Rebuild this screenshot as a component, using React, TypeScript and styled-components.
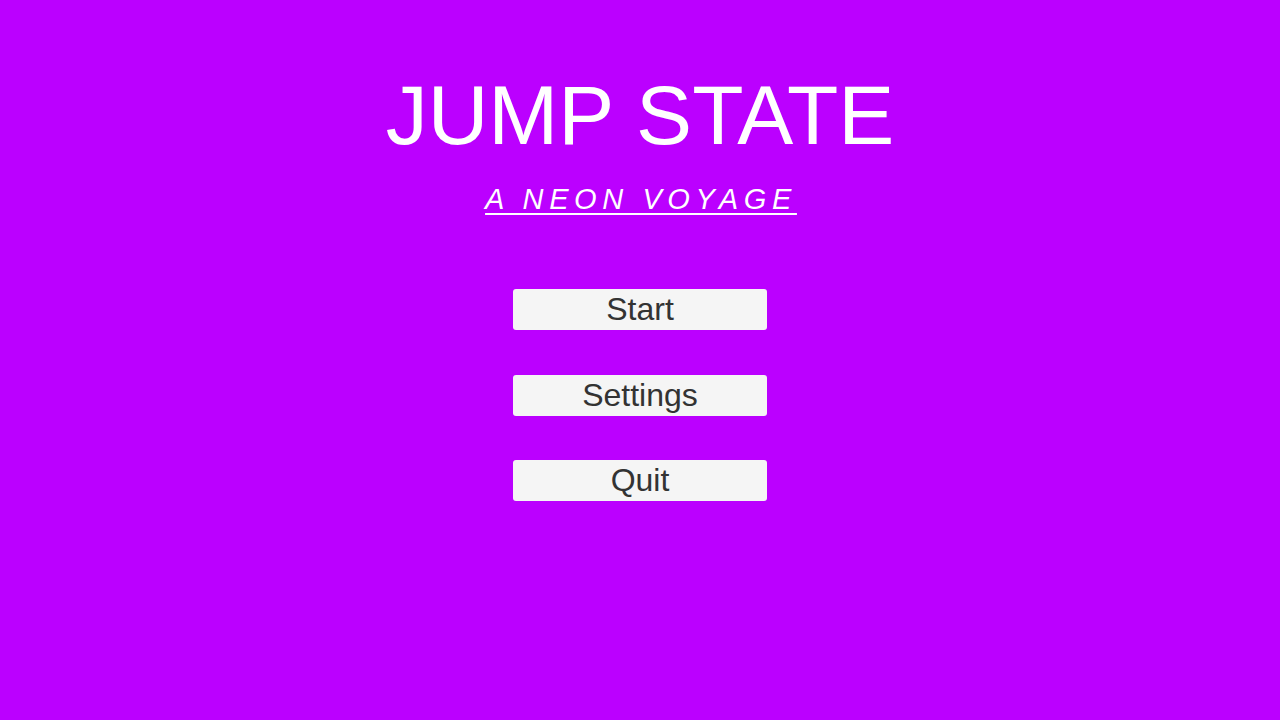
import React from "react";
import styled, { createGlobalStyle } from "styled-components";

const GlobalStyle = createGlobalStyle`
  html, body {
    margin: 0;
    padding: 0;
    background: #bb00ff;
  }
  body {
    font-family: "Liberation Sans", Arial, sans-serif;
  }
`;

const Screen = styled.div`
  width: 100%;
  height: 100vh;
  background: #bb00ff;
  display: flex;
  flex-direction: column;
  align-items: center;
  padding-top: 71px;
  box-sizing: border-box;
`;

const Title = styled.h1`
  margin: 0;
  font-size: 84px;
  font-weight: 400;
  line-height: 88px;
  color: #ffffff;
`;

const Subtitle = styled.h2`
  margin: 25px 0 0;
  font-size: 29px;
  font-weight: 400;
  font-style: italic;
  line-height: 30px;
  letter-spacing: 5.6px;
  padding-left: 2px;
  color: #ffffff;
  text-decoration: underline;
  text-decoration-thickness: 2px;
  text-underline-offset: 4px;
`;

const Menu = styled.nav`
  margin-top: 75px;
  display: flex;
  flex-direction: column;
  gap: 44.5px;
`;

const MenuButton = styled.button`
  width: 254px;
  height: 41px;
  border: none;
  border-radius: 3px;
  background: #f5f5f5;
  color: #333333;
  font-family: "Liberation Sans", Arial, sans-serif;
  font-size: 32px;
  line-height: 41px;
  padding: 0;
  cursor: pointer;
`;

const items = ["Start", "Settings", "Quit"];

function App() {
  return (
    <>
      <GlobalStyle />
      <Screen>
        <Title>JUMP STATE</Title>
        <Subtitle>A NEON VOYAGE</Subtitle>
        <Menu>
          {items.map((label) => (
            <MenuButton key={label}>{label}</MenuButton>
          ))}
        </Menu>
      </Screen>
    </>
  );
}

export default App;
